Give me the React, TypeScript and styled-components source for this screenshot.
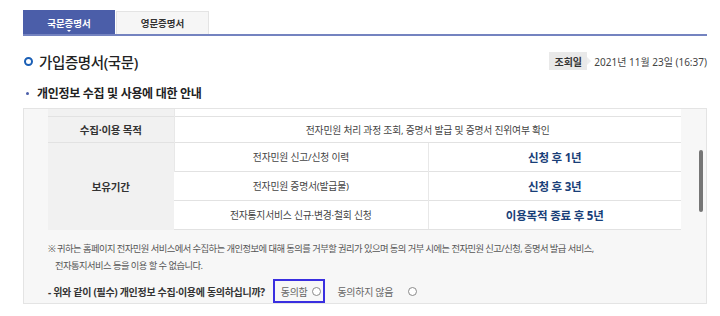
import * as React from 'react';
import styled, { createGlobalStyle } from 'styled-components';

const GlobalStyle = createGlobalStyle`
    html, body {
        margin: 0;
        padding: 0;
        background: #ffffff;
    }

    body {
        font-family: "Noto Sans", "Noto Sans CJK KR", sans-serif;
        color: #333333;
    }
`;

const Page = styled.div`
    width: 720px;
    height: 316px;
    padding: 10px 13px 0 23px;
    box-sizing: border-box;
    overflow: hidden;
`;

const TabBar = styled.div`
    display: flex;
    gap: 1px;
    border-bottom: 2px solid #7483c0;
    height: 24px;
`;

interface TabProps {
    isActive?: boolean;
}

const Tab = styled.div<TabProps>`
    position: relative;
    width: ${props => (props.isActive ? '92px' : '93px')};
    margin-top: ${props => (props.isActive ? '0' : '1px')};
    display: flex;
    justify-content: center;
    align-items: center;
    box-sizing: border-box;
    font-size: 9.5px;
    font-weight: 700;
    color: ${props => (props.isActive ? '#ffffff' : '#333333')};
    background: ${props => (props.isActive ? '#4b5ea9' : '#f6f6f6')};
    border: 1px solid ${props => (props.isActive ? '#4b5ea9' : '#e4e4e4')};
    border-bottom: none;

    &::after {
        content: '';
        display: ${props => (props.isActive ? 'block' : 'none')};
        position: absolute;
        left: 50%;
        bottom: 2px;
        margin-left: -2px;
        border-left: 2px solid transparent;
        border-right: 2px solid transparent;
        border-top: 2px solid #ffffff;
    }
`;

const TitleRow = styled.div`
    display: flex;
    justify-content: space-between;
    align-items: center;
    height: 34px;
    margin-top: 8px;
`;

const Title = styled.h2`
    display: flex;
    align-items: center;
    gap: 6px;
    margin: 0;
    font-size: 14.5px;
    font-weight: 500;
    color: #222222;
    letter-spacing: -0.4px;
`;

const TitleRing = styled.span`
    width: 9px;
    height: 9px;
    box-sizing: border-box;
    border: 2.5px solid #1b5fb5;
    border-radius: 50%;
    margin-left: 1px;
`;

const DateInfo = styled.div`
    display: flex;
    align-items: center;
    font-size: 10px;
    color: #444444;
`;

const DateBadge = styled.span`
    position: relative;
    display: inline-flex;
    align-items: center;
    justify-content: center;
    width: 38px;
    height: 18px;
    background: #e9e9e9;
    font-weight: 700;
    color: #333333;
    margin-right: 7px;

    &::after {
        content: '';
        position: absolute;
        right: -4px;
        top: 5px;
        border-top: 4px solid transparent;
        border-bottom: 4px solid transparent;
        border-left: 4px solid #eeeeee;
    }
`;

const SubTitle = styled.h3`
    display: flex;
    align-items: center;
    gap: 8px;
    margin: 0;
    height: 30px;
    font-size: 12px;
    font-weight: 700;
    color: #222222;
    letter-spacing: -0.3px;

    &::before {
        content: '';
        width: 3px;
        height: 3px;
        border-radius: 50%;
        background: #4b5ea9;
        margin-left: 3px;
    }
`;

const Panel = styled.div`
    position: relative;
    height: 196px;
    box-sizing: border-box;
    border: 1px solid #e4e4e4;
    background: #f7f7f7;
    padding: 0 25px 0 24px;
`;

const ScrollThumb = styled.div`
    position: absolute;
    right: 3px;
    top: 41px;
    width: 4px;
    height: 62px;
    border-radius: 2px;
    background: #767676;
`;

const InfoTable = styled.table`
    width: 633px;
    border-collapse: collapse;
    table-layout: fixed;
`;

interface CellProps {
    isHead?: boolean;
    isStrong?: boolean;
    rowHeight?: number;
}

const Cell = styled.td<CellProps>`
    height: ${props => (props.rowHeight ? `${props.rowHeight}px` : '28px')};
    padding: 0;
    text-align: center;
    vertical-align: middle;
    background: ${props => (props.isHead ? '#f1f1f1' : '#ffffff')};
    border-top: 1px solid #e2e2e2;
    border-left: 1px solid #e8e8e8;
    font-weight: ${props => (props.isHead || props.isStrong ? 700 : 400)};
    font-size: ${props => (props.isStrong ? '11.5px' : props.isHead ? '10.5px' : '9.8px')};
    color: ${props => (props.isStrong ? '#183e78' : props.isHead ? '#333333' : '#444444')};
    letter-spacing: -0.2px;

    &:first-child {
        border-left: none;
    }
`;

const CutRow = styled.tr`
    td {
        border-top: none;
    }
`;

const BottomRow = styled.tr`
    td {
        border-bottom: 1px solid #e2e2e2;
    }
`;

const Note = styled.p`
    margin: 10px 0 0 0;
    padding-left: 7px;
    text-indent: -7px;
    font-size: 9.3px;
    line-height: 17px;
    color: #555555;
    letter-spacing: -0.55px;
    white-space: nowrap;
`;

const Question = styled.div`
    display: flex;
    align-items: center;
    margin-top: 5px;
    font-size: 10px;
    color: #444444;
    letter-spacing: -0.3px;
`;

const QuestionText = styled.span`
    font-weight: 700;
    color: #333333;
    margin-right: 8px;
`;

interface ChoiceProps {
    isFocused?: boolean;
}

const Choice = styled.label<ChoiceProps>`
    display: inline-flex;
    align-items: center;
    gap: 5px;
    height: 24px;
    box-sizing: border-box;
    padding: 0 2px 0 6px;
    border: 2px solid ${props => (props.isFocused ? '#3a2fe0' : 'transparent')};
    margin-right: 4px;
    color: #666666;
`;

const RadioDot = styled.span`
    width: 7px;
    height: 7px;
    border: 1px solid #8a8a8a;
    border-radius: 50%;
    background: #ffffff;
`;

const WideChoice = styled(Choice)`
    gap: 15px;
`;

export default function App() {
    return (
        <Page>
            <GlobalStyle />
            <TabBar>
                <Tab isActive={true}>국문증명서</Tab>
                <Tab>영문증명서</Tab>
            </TabBar>
            <TitleRow>
                <Title>
                    <TitleRing />
                    가입증명서(국문)
                </Title>
                <DateInfo>
                    <DateBadge>조회일</DateBadge>
                    2021년 11월 23일 (16:37)
                </DateInfo>
            </TitleRow>
            <SubTitle>개인정보 수집 및 사용에 대한 안내</SubTitle>
            <Panel>
                <InfoTable>
                    <colgroup>
                        <col style={{ width: '126px' }} />
                        <col style={{ width: '254px' }} />
                        <col style={{ width: '253px' }} />
                    </colgroup>
                    <tbody>
                        <CutRow>
                            <Cell isHead={true} rowHeight={7} />
                            <Cell rowHeight={7} colSpan={2} />
                        </CutRow>
                        <tr>
                            <Cell isHead={true} rowHeight={25}>수집·이용 목적</Cell>
                            <Cell rowHeight={25} colSpan={2}>
                                전자민원 처리 과정 조회, 증명서 발급 및 증명서 진위여부 확인
                            </Cell>
                        </tr>
                        <tr>
                            <Cell isHead={true} rowSpan={3}>보유기간</Cell>
                            <Cell>전자민원 신고/신청 이력</Cell>
                            <Cell isStrong={true}>신청 후 1년</Cell>
                        </tr>
                        <tr>
                            <Cell>전자민원 증명서(발급물)</Cell>
                            <Cell isStrong={true}>신청 후 3년</Cell>
                        </tr>
                        <BottomRow>
                            <Cell>전자통지서비스 신규·변경·철회 신청</Cell>
                            <Cell isStrong={true}>이용목적 종료 후 5년</Cell>
                        </BottomRow>
                    </tbody>
                </InfoTable>
                <Note>
                    ※ 귀하는 홈페이지 전자민원 서비스에서 수집하는 개인정보에 대해 동의를 거부할 권리가 있으며 동의 거부 시에는 전자민원 신고/신청, 증명서 발급 서비스,
                    <br />
                    전자통지서비스 등을 이용 할 수 없습니다.
                </Note>
                <Question>
                    <QuestionText>- 위와 같이 (필수) 개인정보 수집·이용에 동의하십니까?</QuestionText>
                    <Choice isFocused={true}>
                        동의함
                        <RadioDot />
                    </Choice>
                    <WideChoice>
                        동의하지 않음
                        <RadioDot />
                    </WideChoice>
                </Question>
                <ScrollThumb />
            </Panel>
        </Page>
    );
}
